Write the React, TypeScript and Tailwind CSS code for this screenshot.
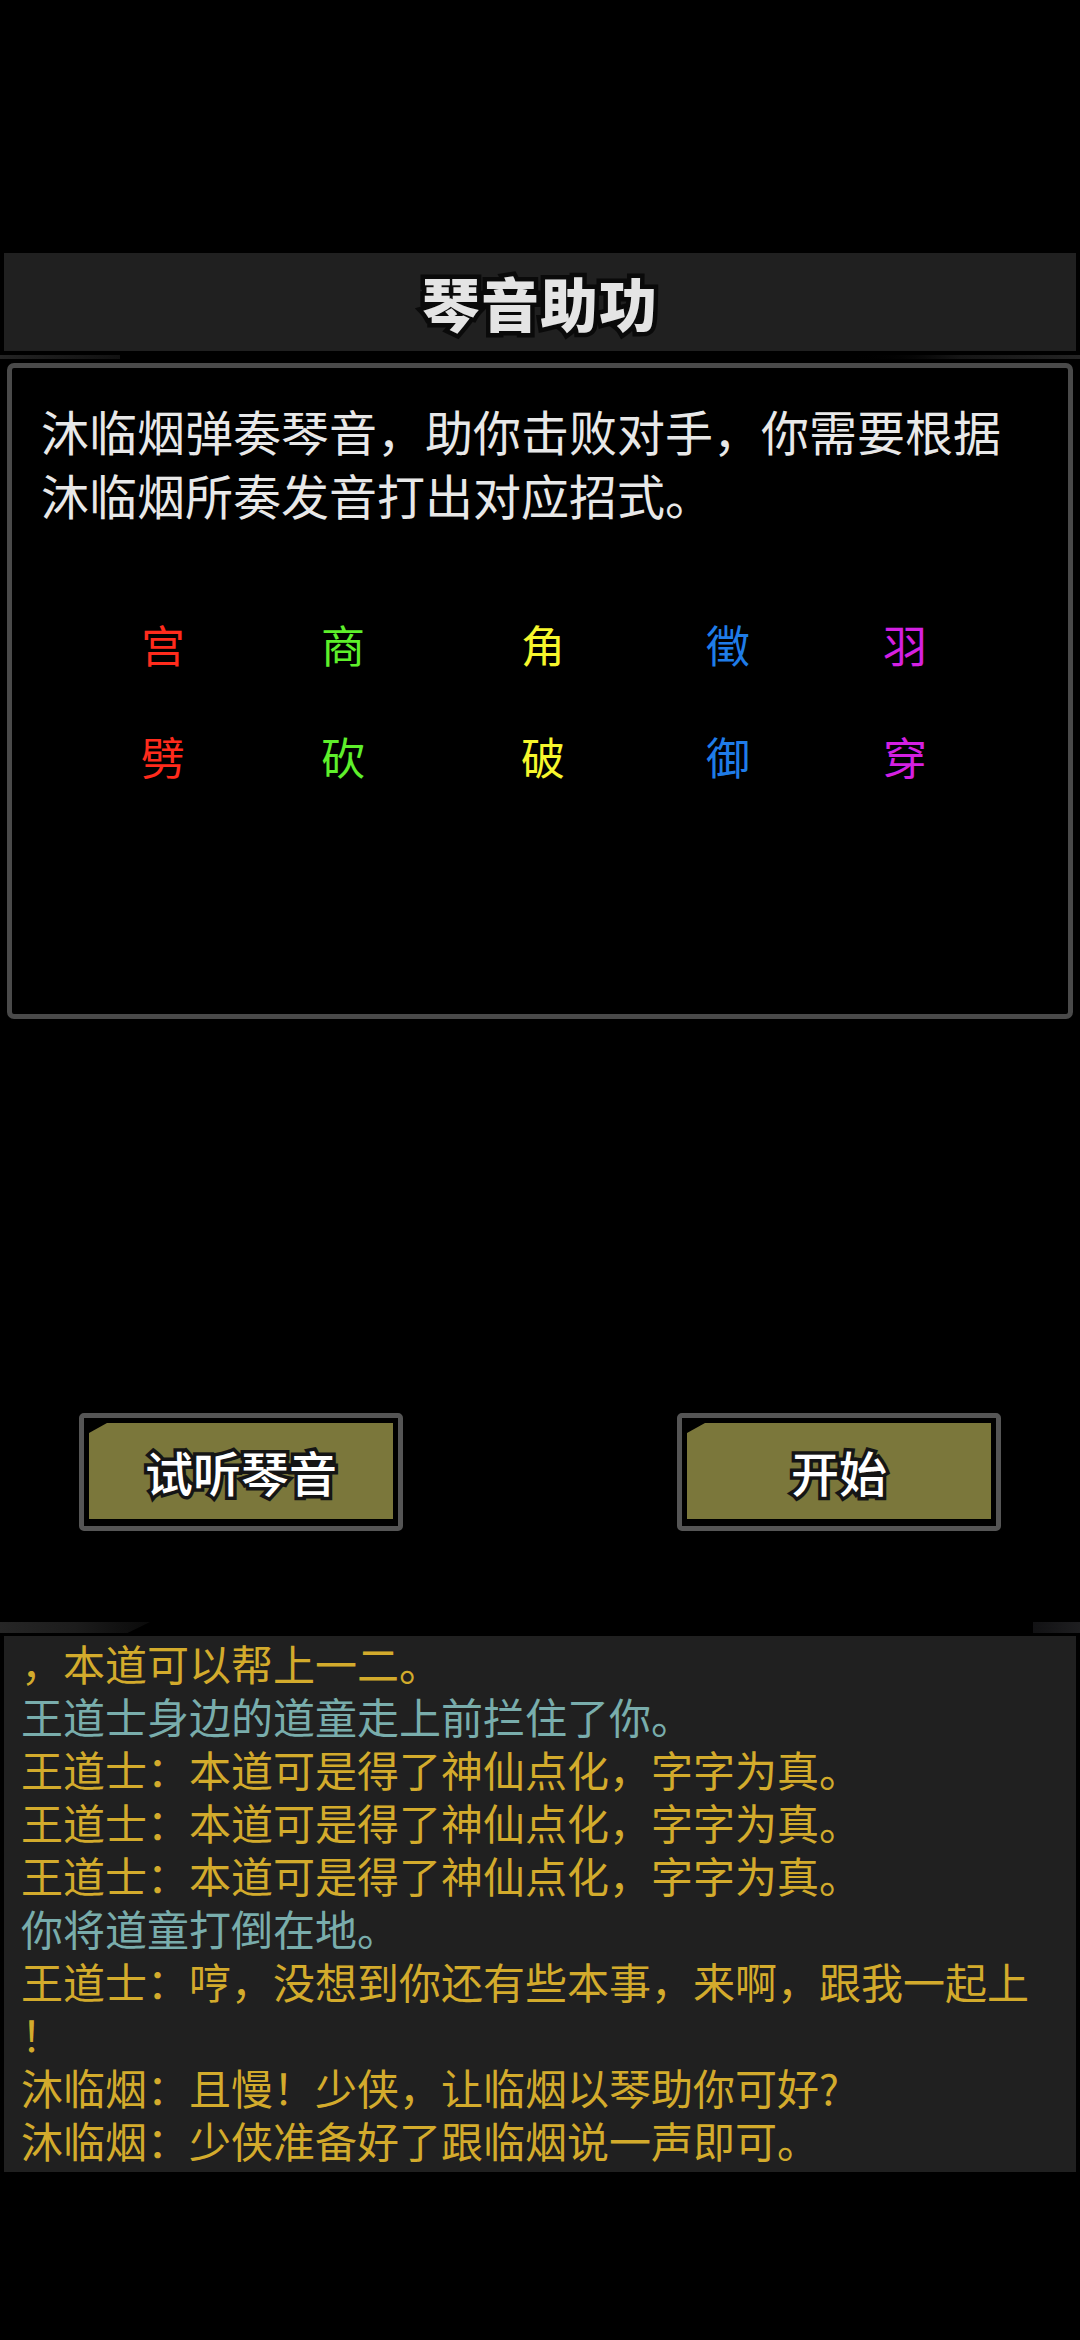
import React from 'react';

const FONT = "font-['Noto_Sans_CJK_SC','Noto_Sans',sans-serif]";

const notes = [
    { tone: '宫', move: '劈', color: 'text-[#ff2b1c]' },
    { tone: '商', move: '砍', color: 'text-[#5ef02b]' },
    { tone: '角', move: '破', color: 'text-[#f6f62c]' },
    { tone: '徵', move: '御', color: 'text-[#1f7ce8]' },
    { tone: '羽', move: '穿', color: 'text-[#d420e2]' },
];

const GOLD = 'text-[#d3ab2c]';
const TEAL = 'text-[#79adac]';

const logLines = [
    { text: '，本道可以帮上一二。', color: GOLD },
    { text: '王道士身边的道童走上前拦住了你。', color: TEAL },
    { text: '王道士：本道可是得了神仙点化，字字为真。', color: GOLD },
    { text: '王道士：本道可是得了神仙点化，字字为真。', color: GOLD },
    { text: '王道士：本道可是得了神仙点化，字字为真。', color: GOLD },
    { text: '你将道童打倒在地。', color: TEAL },
    { text: '王道士：哼，没想到你还有些本事，来啊，跟我一起上！', color: GOLD },
    { text: '沐临烟：且慢！少侠，让临烟以琴助你可好?', color: GOLD },
    { text: '沐临烟：少侠准备好了跟临烟说一声即可。', color: GOLD },
];

const GameButton: React.FC<{ label: string; className?: string }> = ({ label, className }) => (
    <button
        type="button"
        className={`w-[324px] h-[118px] border-[5px] border-[#555555] rounded-[5px] bg-black pt-[5px] pl-[5px] pr-[5px] pb-[7px] ${className ?? ''}`}
    >
        <div className="w-full h-full bg-[#7b773b] flex items-center justify-center [clip-path:polygon(0_10px,18px_0,100%_0,100%_100%,0_100%)]">
            <span className={`${FONT} text-[48px] leading-none font-medium text-white [-webkit-text-stroke:7px_#151515] [paint-order:stroke_fill]`}>
                {label}
            </span>
        </div>
    </button>
);

export default function App() {
    return (
        <div className={`${FONT} w-[1080px] h-[2340px] bg-black overflow-hidden flex flex-col`}>
            <div className="h-[253px] shrink-0" />

            {/* title bar */}
            <div className="ml-[4px] w-[1072px] h-[98px] shrink-0 bg-[#202020] flex items-center justify-center">
                <span className="text-[58px] leading-none font-black tracking-[1px] text-[#e4e4e4] [-webkit-text-stroke:9px_#0a0a0a] [paint-order:stroke_fill]">
                    琴音助功
                </span>
            </div>

            <div className="h-[12px] shrink-0 flex items-center justify-between">
                <div className="w-[120px] h-[4px] bg-gradient-to-r from-[#242424] to-[#121212]" />
                <div className="w-[240px] h-[4px] bg-gradient-to-r from-black via-[#161616] to-[#242424]" />
            </div>

            {/* rules panel */}
            <div className="ml-[7px] w-[1066px] h-[656px] shrink-0 border-[5px] border-[#4a4a4a] rounded-[7px] pt-[30px] pl-[29px] pr-[37px]">
                <p className="text-[48px] leading-[64px] text-[#e8e8e8] [text-shadow:0_0_3px_#000,0_0_2px_#000]">
                    沐临烟弹奏琴音，助你击败对手，你需要根据沐临烟所奏发音打出对应招式。
                </p>
                <div className="mt-[62px] ml-[32px] grid grid-cols-[180px_180px_220px_150px_204px]">
                    {notes.map(n => (
                        <div key={n.tone} className={`h-[112px] flex items-center justify-center text-[44px] leading-none ${n.color}`}>
                            {n.tone}
                        </div>
                    ))}
                    {notes.map(n => (
                        <div key={n.move} className={`h-[112px] flex items-center justify-center text-[44px] leading-none ${n.color}`}>
                            {n.move}
                        </div>
                    ))}
                </div>
            </div>

            <div className="h-[394px] shrink-0" />

            {/* actions */}
            <div className="h-[118px] shrink-0 flex">
                <GameButton label="试听琴音" className="ml-[79px]" />
                <GameButton label="开始" className="ml-[274px]" />
            </div>

            <div className="h-[91px] shrink-0" />

            <div className="h-[14px] shrink-0 flex justify-between">
                <div className="w-[150px] h-[11px] bg-gradient-to-r from-[#262626] via-[#1c1c1c] to-[#0a0a0a] [clip-path:polygon(0_0,100%_0,85%_100%,0_100%)]" />
                <div className="w-[47px] h-[11px] bg-gradient-to-r from-[#121214] to-[#1e1e20]" />
            </div>

            {/* message log */}
            <div className="ml-[4px] w-[1072px] h-[536px] shrink-0 bg-[#202020] overflow-hidden pl-[17px]">
                <div className="w-[1030px] text-[42px] leading-[53px] [line-break:anywhere]">
                    {logLines.map((l, i) => (
                        <div key={i} className={l.color}>{l.text}</div>
                    ))}
                </div>
            </div>
        </div>
    );
}
